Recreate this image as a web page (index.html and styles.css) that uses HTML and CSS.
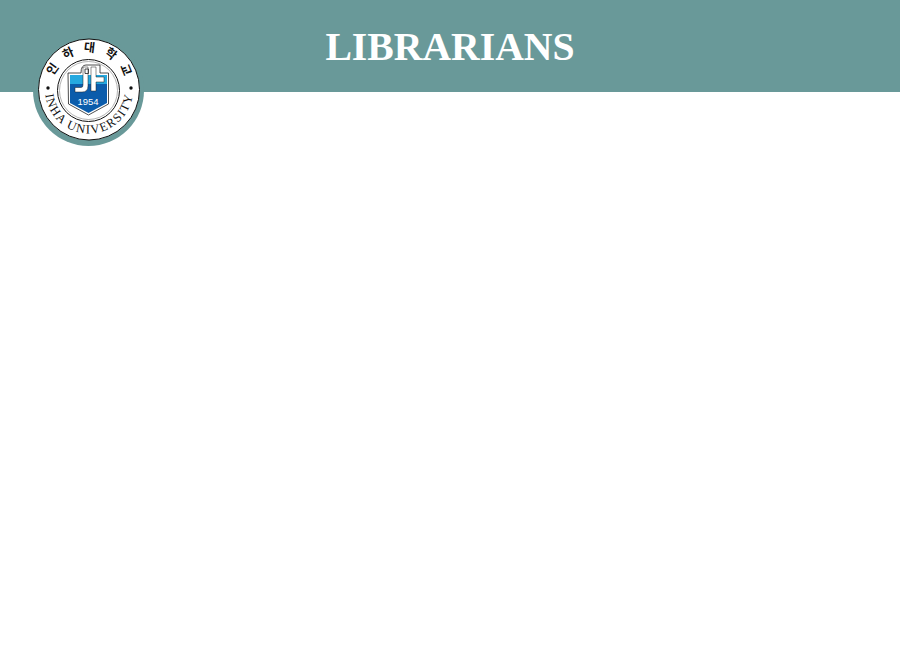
FILE: index.html
```html
<!DOCTYPE html>
<html lang="en">
<head>
<meta charset="utf-8">
<title>Librarians</title>
<link rel="stylesheet" href="styles.css">
</head>
<body>
<header class="banner">
  <h1 class="title">LIBRARIANS</h1>
  <div class="seal">
    <svg class="seal-art" viewBox="0 0 112 112" width="112" height="112" aria-label="Inha University seal">
      <defs>
        <path id="arc-top" d="M 18.5 54.5 A 37.5 37.5 0 0 1 93.5 54.5"/>
        <path id="arc-bottom" d="M 12 54.5 A 44 44 0 0 0 100 54.5"/>
      </defs>
      <circle class="seal-disc" cx="55.5" cy="55.500" r="55.500"/>
      <circle class="seal-face" cx="56" cy="54.500" r="50.500"/>
      <circle class="seal-ring" cx="55.500" cy="55.500" r="31"/>
      <circle class="seal-ring-thin" cx="55.500" cy="55.500" r="29"/>
      <text class="seal-ko"><textPath href="#arc-top" startOffset="53.8%">인하대학교</textPath></text>
      <text class="seal-en"><textPath href="#arc-bottom" startOffset="50%">INHA UNIVERSITY</textPath></text>
      <circle class="seal-dot" cx="15" cy="53" r="1.700"/>
      <circle class="seal-dot" cx="98" cy="53" r="1.700"/>
      <path class="shield-outline" d="M35 38H48Q48 30 53 30H67V38H75.500V69L55.500 80L35.500 69Z"/>
      <path class="shield-blue" d="M37 49H74V68L55.500 78L37 68Z"/>
      <path class="shield-light" d="M37 40H74V49H37Z"/>
      <path class="shield-glyph" d="M50 32H55V51Q55 57 49 57H42V52.500H48Q50 52.500 50 50ZM58 32H63V42H71V47H63V56H58Z"/>
      <path class="shield-mark" d="M52 34H55.500V38.500H52Z"/>
      <text class="shield-year" x="55" y="70">1954</text>
    </svg>
  </div>
</header>
</body>
</html>
```
FILE: styles.css
```css
html, body {
  margin: 0;
  padding: 0;
  background: #fff;
  min-height: 650px;
}

.banner {
  position: relative;
  height: 92px;
  background: #699999;
  display: flex;
  justify-content: center;
  padding-top: 26px;
  box-sizing: border-box;
}

.title {
  margin: 0;
  font-family: "Liberation Serif", "Times New Roman", serif;
  font-weight: 700;
  font-size: 39.7px;
  line-height: 42px;
  color: #fff;
}

.seal {
  position: absolute;
  left: 33px;
  top: 35px;
  width: 112px;
  height: 112px;
}

.seal-art {
  display: block;
}

.seal-disc { fill: #699999; }
.seal-face { fill: #fff; stroke: #111; stroke-width: 1; }
.seal-ring { fill: #fff; stroke: #111; stroke-width: 1; }
.seal-ring-thin { fill: none; stroke: #666; stroke-width: 0.5; }
.seal-dot { fill: #111; }

.seal-ko {
  font-family: "Noto Sans CJK KR", sans-serif;
  font-size: 12px;
  font-weight: 700;
  letter-spacing: 9px;
  text-anchor: middle;
  fill: #111;
}

.seal-en {
  font-family: "Liberation Serif", serif;
  font-size: 12.500px;
  letter-spacing: 1.300px;
  text-anchor: middle;
  fill: #111;
}

.shield-outline { fill: #fff; stroke: #222; stroke-width: 0.8; }
.shield-blue { fill: #0b5cab; }
.shield-light { fill: #25a9e0; }
.shield-glyph { fill: #fff; stroke: #222; stroke-width: 0.5; }
.shield-mark { fill: none; stroke: #222; stroke-width: 0.8; }

.shield-year {
  font-family: "Liberation Sans", sans-serif;
  font-size: 9.500px;
  text-anchor: middle;
  fill: #fff;
}
```
